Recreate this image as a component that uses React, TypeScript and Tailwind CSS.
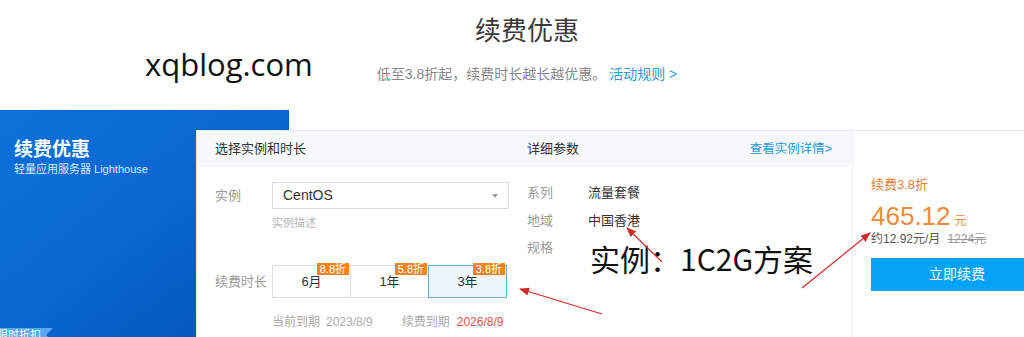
import React from 'react';

const FONT = "font-['Liberation_Sans','Noto_Sans_CJK_SC',sans-serif]";

const durations = [
  { label: '6月', badge: '8.8折', active: false },
  { label: '1年', badge: '5.8折', active: false },
  { label: '3年', badge: '3.8折', active: true },
];

const specs = [
  { label: '系列', value: '流量套餐' },
  { label: '地域', value: '中国香港' },
  { label: '规格', value: '' },
];

function Arrow({ x1, y1, x2, y2 }: { x1: number; y1: number; x2: number; y2: number }) {
  return <line x1={x1} y1={y1} x2={x2} y2={y2} stroke="#d22a2a" strokeWidth="1.2" markerEnd="url(#head)" />;
}

function App() {
  return (
    <div className={`relative h-[337px] w-[1024px] overflow-hidden bg-white ${FONT}`}>
      <header className="flex h-[110px] flex-col items-center pl-[30px]">
        <h1 className="mt-[14px] text-[26px] leading-[34px] text-[#3a3a3a]">续费优惠</h1>
        <p className="mt-[17px] text-[14px] leading-[18px] text-[#888]">
          低至3.8折起，续费时长越长越优惠。<span className="ml-[3px] text-[#2a9ad8]">活动规则 &gt;</span>
        </p>
      </header>

      <section className="flex h-[227px]">
        <div className="relative w-[289px] shrink-0 bg-linear-to-br from-[#0c72da] via-[#0a66d0] to-[#0152b4] pl-[14px] pt-[28px]">
          <div className="text-[19px] font-bold leading-[24px] text-white">续费优惠</div>
          <div className="text-[11px] leading-[14px] text-[#dbe9fb]">轻量应用服务器 Lighthouse</div>
          <div className="absolute bottom-[-5px] left-[-4px] h-[14px] bg-[#5aa8f4] pl-[1px] pr-[12px] text-[11px] leading-[14px] text-white [clip-path:polygon(0_0,100%_0,88%_50%,100%_100%,0_100%)]">
            限时折扣
          </div>
        </div>

        <div className="relative z-10 -ml-[93px] mt-[20px] flex h-[240px] w-[860px] shrink-0 border border-[#e6e9ee] bg-white">
          {/* instance and duration */}
          <div className="w-[314px] shrink-0">
            <div className="flex h-[36px] items-center bg-[#f6f8fa] pl-[18px] text-[13px] text-[#333]">选择实例和时长</div>
            <div className="pl-[18px]">
              <div className="mt-[15px] flex items-center">
                <span className="w-[57px] text-[13px] text-[#999]">实例</span>
                <div className="flex h-[27px] w-[237px] items-center justify-between border border-[#dcdcdc] pl-[10px] pr-[10px]">
                  <span className="text-[14px] text-[#333]">CentOS</span>
                  <span className="h-0 w-0 border-x-[3.5px] border-t-[4px] border-x-transparent border-t-[#999]" />
                </div>
              </div>
              <div className="ml-[57px] mt-[7px] text-[11px] leading-[15px] text-[#b5b5b5]">实例描述</div>

              <div className="mt-[34px] flex items-center">
                <span className="w-[57px] text-[13px] text-[#999]">续费时长</span>
                <div className="flex">
                  {durations.map((d, i) => (
                    <div
                      key={d.label}
                      className={`relative flex h-[33px] w-[79px] items-center justify-center border text-[13px] text-[#333] ${
                        d.active ? 'border-[#6aaecf] bg-[#eef6fc]' : 'border-[#dddddd]'
                      } ${i > 0 ? '-ml-px' : ''}`}
                    >
                      {d.label}
                      <span className="absolute right-px top-[-3px] h-[12px] bg-[#ef8420] px-[3px] text-[11px] leading-[12px] text-white">
                        {d.badge}
                      </span>
                    </div>
                  ))}
                </div>
              </div>

              <div className="ml-[57px] mt-[16px] flex text-[12px] leading-[16px] text-[#aaa]">
                <span>当前到期</span>
                <span className="ml-[6px]">2023/8/9</span>
                <span className="ml-[29px]">续费到期</span>
                <span className="ml-[7px] text-[#d9534f]">2026/8/9</span>
              </div>
            </div>
          </div>

          {/* details */}
          <div className="w-[341px] shrink-0">
            <div className="flex h-[36px] items-center justify-between bg-[#f6f8fa] pl-[16px] pr-[20px] text-[13px]">
              <span className="text-[#333]">详细参数</span>
              <span className="text-[12.5px] text-[#2a9ad8]">查看实例详情&gt;</span>
            </div>
            <div className="mt-[12px] pl-[16px]">
              {specs.map((s) => (
                <div key={s.label} className="flex h-[27.5px] items-center text-[13px]">
                  <span className="w-[61px] text-[#999]">{s.label}</span>
                  <span className="text-[#333]">{s.value}</span>
                </div>
              ))}
            </div>
          </div>

          {/* price */}
          <div className="flex-1 border-l border-[#eceef1] pl-[18px] pt-[45px]">
            <div className="text-[13px] leading-[18px] text-[#e8803a]">续费3.8折</div>
            <div className="mt-[7px] flex items-baseline text-[#ef8a3c]">
              <span className="text-[26px] leading-[30px]">465.12</span>
              <span className="ml-[4px] text-[12px]">元</span>
            </div>
            <div className="flex text-[12px] leading-[16px]">
              <span className="text-[#555]">约12.92元/月</span>
              <span className="ml-[7px] text-[#999] line-through">1224元</span>
            </div>
            <button className="mt-[11px] h-[33px] w-[172px] bg-[#05a3f7] text-[14px] text-white">立即续费</button>
          </div>
        </div>
      </section>

      {/* annotations drawn over the screenshot */}
      <div className="absolute left-[145px] top-[49px] z-20 font-['Open_Sans',sans-serif] text-[31px] leading-[31px] text-[#111]">
        xqblog.com
      </div>
      <div className="absolute left-[590px] top-[238px] z-20 font-['Noto_Sans_CJK_SC',sans-serif] text-[30px] leading-[40px] text-[#111]">
        实例：1C2G方案
      </div>
      <svg className="pointer-events-none absolute left-0 top-0 z-20" width="1024" height="337">
        <defs>
          <marker id="head" markerWidth="10" markerHeight="8" refX="9" refY="4" orient="auto" markerUnits="userSpaceOnUse">
            <path d="M0,0 L10,4 L0,8 Z" fill="#d22a2a" />
          </marker>
        </defs>
        <Arrow x1={602} y1={314} x2={520} y2={289} />
        <Arrow x1={662} y1={262} x2={627} y2={228} />
        <Arrow x1={802} y1={288} x2={870} y2={233} />
      </svg>
    </div>
  );
}

export default App;
